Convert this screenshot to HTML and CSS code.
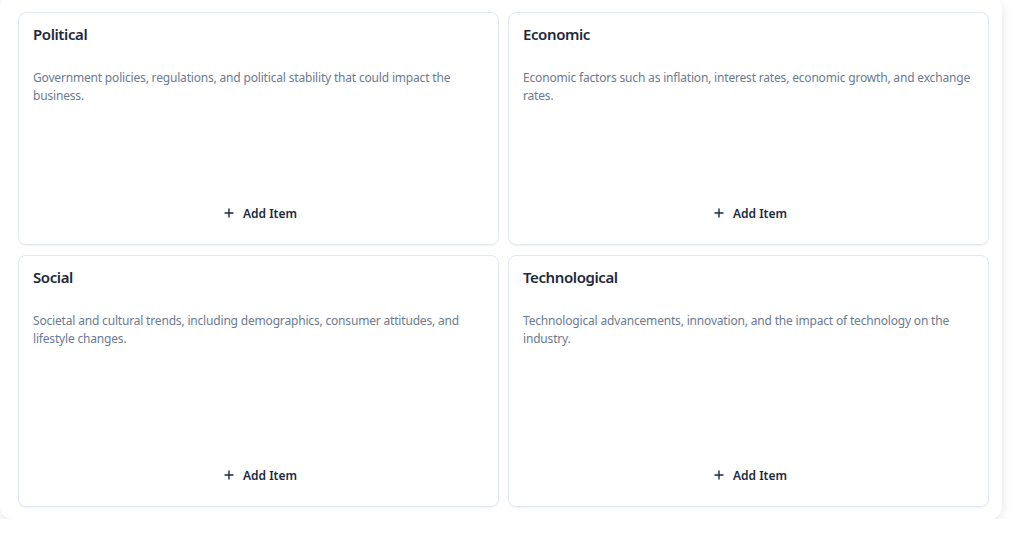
FILE: index.html
```html
<!DOCTYPE html>
<html lang="en">
<head>
    <meta charset="UTF-8">
    <meta name="viewport" content="width=device-width, initial-scale=1.0">
    <title>PEST Analysis</title>
    <link rel="stylesheet" href="styles.css">
</head>
<body>

<div class="board">
    <div class="pest-grid">
        <div class="pest-card">
            <h3>Political</h3>
            <p>Government policies, regulations, and political stability that could impact the business.</p>
            <button class="add-btn"><svg class="plus" viewBox="0 0 10 10"><path d="M5 0.5v9M0.5 5h9"/></svg> Add Item</button>
        </div>
        <div class="pest-card">
            <h3>Economic</h3>
            <p>Economic factors such as inflation, interest rates, economic growth, and exchange rates.</p>
            <button class="add-btn"><svg class="plus" viewBox="0 0 10 10"><path d="M5 0.5v9M0.5 5h9"/></svg> Add Item</button>
        </div>
        <div class="pest-card">
            <h3>Social</h3>
            <p>Societal and cultural trends, including demographics, consumer attitudes, and lifestyle changes.</p>
            <button class="add-btn"><svg class="plus" viewBox="0 0 10 10"><path d="M5 0.5v9M0.5 5h9"/></svg> Add Item</button>
        </div>
        <div class="pest-card">
            <h3>Technological</h3>
            <p>Technological advancements, innovation, and the impact of technology on the industry.</p>
            <button class="add-btn"><svg class="plus" viewBox="0 0 10 10"><path d="M5 0.5v9M0.5 5h9"/></svg> Add Item</button>
        </div>
    </div>
</div>

</body>
</html>
```

FILE: styles.css
```css
body {
    font-family: "Noto Sans", "Open Sans", sans-serif;
    margin: 0;
    background-color: #fff;
}
.board {
    width: 1002px;
    height: 523px;
    margin-top: -4px;
    box-sizing: border-box;
    padding: 16px 13px 12px 18px;
    background-color: #fff;
    border-radius: 12px;
    box-shadow: 0 4px 12px rgba(0, 0, 0, 0.1);
}
.pest-grid {
    display: grid;
    grid-template-columns: 481px 481px;
    grid-template-rows: 233px 252px;
    column-gap: 9px;
    row-gap: 10px;
}
.pest-card {
    display: flex;
    flex-direction: column;
    box-sizing: border-box;
    padding: 11px 10px 15px 14px;
    border: 1px solid #e2e8f0;
    border-radius: 8px;
    box-shadow: 0 1px 2px rgba(0, 0, 0, 0.06);
}
.pest-card h3 {
    margin: 0;
    font-size: 15px;
    font-weight: 600;
    line-height: 20px;
    letter-spacing: -0.4px;
    color: #1e293b;
}
.pest-card p {
    flex: 1;
    margin: 25px 0 0;
    font-size: 12px;
    line-height: 18px;
    letter-spacing: -0.18px;
    color: #6b7a90;
}
.add-btn {
    align-self: center;
    display: flex;
    align-items: center;
    gap: 9px;
    height: 32px;
    padding: 0 12px;
    font-family: inherit;
    font-size: 12px;
    font-weight: 600;
    color: #1e293b;
    background: none;
    border: none;
    cursor: pointer;
}
.add-btn .plus {
    width: 10px;
    height: 10px;
    stroke: #1e293b;
    stroke-width: 1.4;
    fill: none;
}
```
